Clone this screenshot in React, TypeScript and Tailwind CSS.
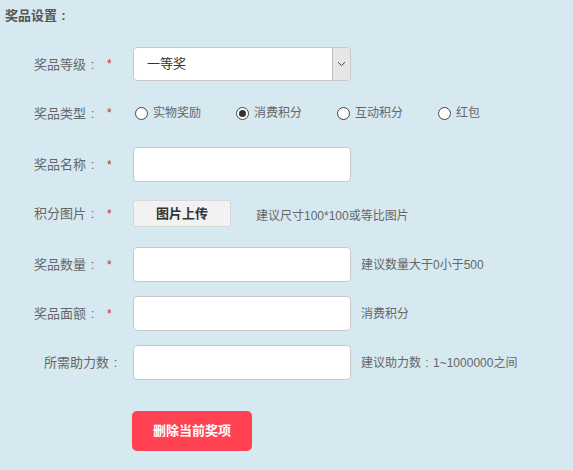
import React from 'react';

const font = { fontFamily: '"Liberation Sans", "Noto Sans CJK SC", sans-serif' };

// full-width colon, centred in its cell like the reference font draws it
const Colon: React.FC = () => <span className="inline-block w-[13px] text-center">:</span>;

interface FieldLabelProps {
  text: string;
  required?: boolean;
}

const FieldLabel: React.FC<FieldLabelProps> = ({ text, required }) => (
  <div className="w-[122px] shrink-0 flex justify-end items-center text-[13px] text-[#666]">
    <span className="pt-[1px]">
      {text}
      <Colon />
    </span>
    {required && <span className="ml-[8px] mr-[9px] w-[6px] text-[#d9252c] text-[12px]">*</span>}
  </div>
);

const Radio: React.FC<{ label: string; checked?: boolean }> = ({ label, checked }) => (
  <label className="w-[101px] flex items-center">
    <span className="w-[13px] h-[13px] rounded-full border border-[#444] bg-white flex items-center justify-center">
      {checked && <span className="w-[7px] h-[7px] rounded-full bg-[#333]" />}
    </span>
    <span className="ml-[5px] text-[12px] text-[#666]">{label}</span>
  </label>
);

const TextBox: React.FC = () => (
  <div className="ml-[11px] w-[218px] h-[35px] bg-white border border-[#c8c8c8] rounded-[4px]" />
);

const Hint: React.FC<{ children: React.ReactNode; className?: string }> = ({ children, className }) => (
  <span className={`text-[12px] text-[#666] ${className ?? 'ml-[10px]'}`}>{children}</span>
);

const App: React.FC = () => {
  return (
    <div className="w-[573px] h-[470px] bg-[#d6e9f0] overflow-hidden" style={font}>
      <div className="pt-[6px] pl-[5px] leading-[20px] text-[13px] font-bold text-[#555]">
        奖品设置
        <Colon />
      </div>

      <div className="mt-[21px] flex items-center">
        <FieldLabel text="奖品等级" required />
        <div className="ml-[11px] w-[218px] h-[34px] bg-white border border-[#c8c8c8] rounded-[4px] flex items-center">
          <span className="ml-[13px] flex-1 text-[13px] text-[#333]">一等奖</span>
          <span className="w-[18px] h-full bg-[#e6e6e6] border-l border-[#bbb] rounded-r-[3px] flex items-center justify-center">
            <svg width="9" height="6" viewBox="0 0 9 6">
              <path d="M1 1.2 L4.5 4.6 L8 1.2" fill="none" stroke="#444" strokeWidth="1" />
            </svg>
          </span>
        </div>
      </div>

      <div className="mt-[22px] h-[20px] flex items-center">
        <FieldLabel text="奖品类型" required />
        <div className="ml-[13px] flex items-center">
          <Radio label="实物奖励" />
          <Radio label="消费积分" checked />
          <Radio label="互动积分" />
          <Radio label="红包" />
        </div>
      </div>

      <div className="mt-[24px] flex items-center">
        <FieldLabel text="奖品名称" required />
        <TextBox />
      </div>

      <div className="mt-[18px] flex items-center">
        <FieldLabel text="积分图片" required />
        <button className="ml-[11px] w-[98px] h-[27px] bg-[#f2f2f2] border border-[#d8d8d8] rounded-[2px] text-[13px] font-bold text-[#333]">
          图片上传
        </button>
        <Hint className="ml-[25px] mt-[5px]">建议尺寸100*100或等比图片</Hint>
      </div>

      <div className="mt-[20px] flex items-center">
        <FieldLabel text="奖品数量" required />
        <TextBox />
        <Hint>建议数量大于0小于500</Hint>
      </div>

      <div className="mt-[14px] flex items-center">
        <FieldLabel text="奖品面额" required />
        <TextBox />
        <Hint>消费积分</Hint>
      </div>

      <div className="mt-[14px] flex items-center">
        <FieldLabel text="所需助力数" />
        <TextBox />
        <Hint>
          建议助力数
          <span className="inline-block w-[12px] text-center">:</span>
          1~1000000之间
        </Hint>
      </div>

      <button className="mt-[31px] ml-[132px] w-[120px] h-[40px] bg-[#ff4352] rounded-[5px] text-white text-[13px] font-bold">
        删除当前奖项
      </button>
    </div>
  );
};

export default App;
